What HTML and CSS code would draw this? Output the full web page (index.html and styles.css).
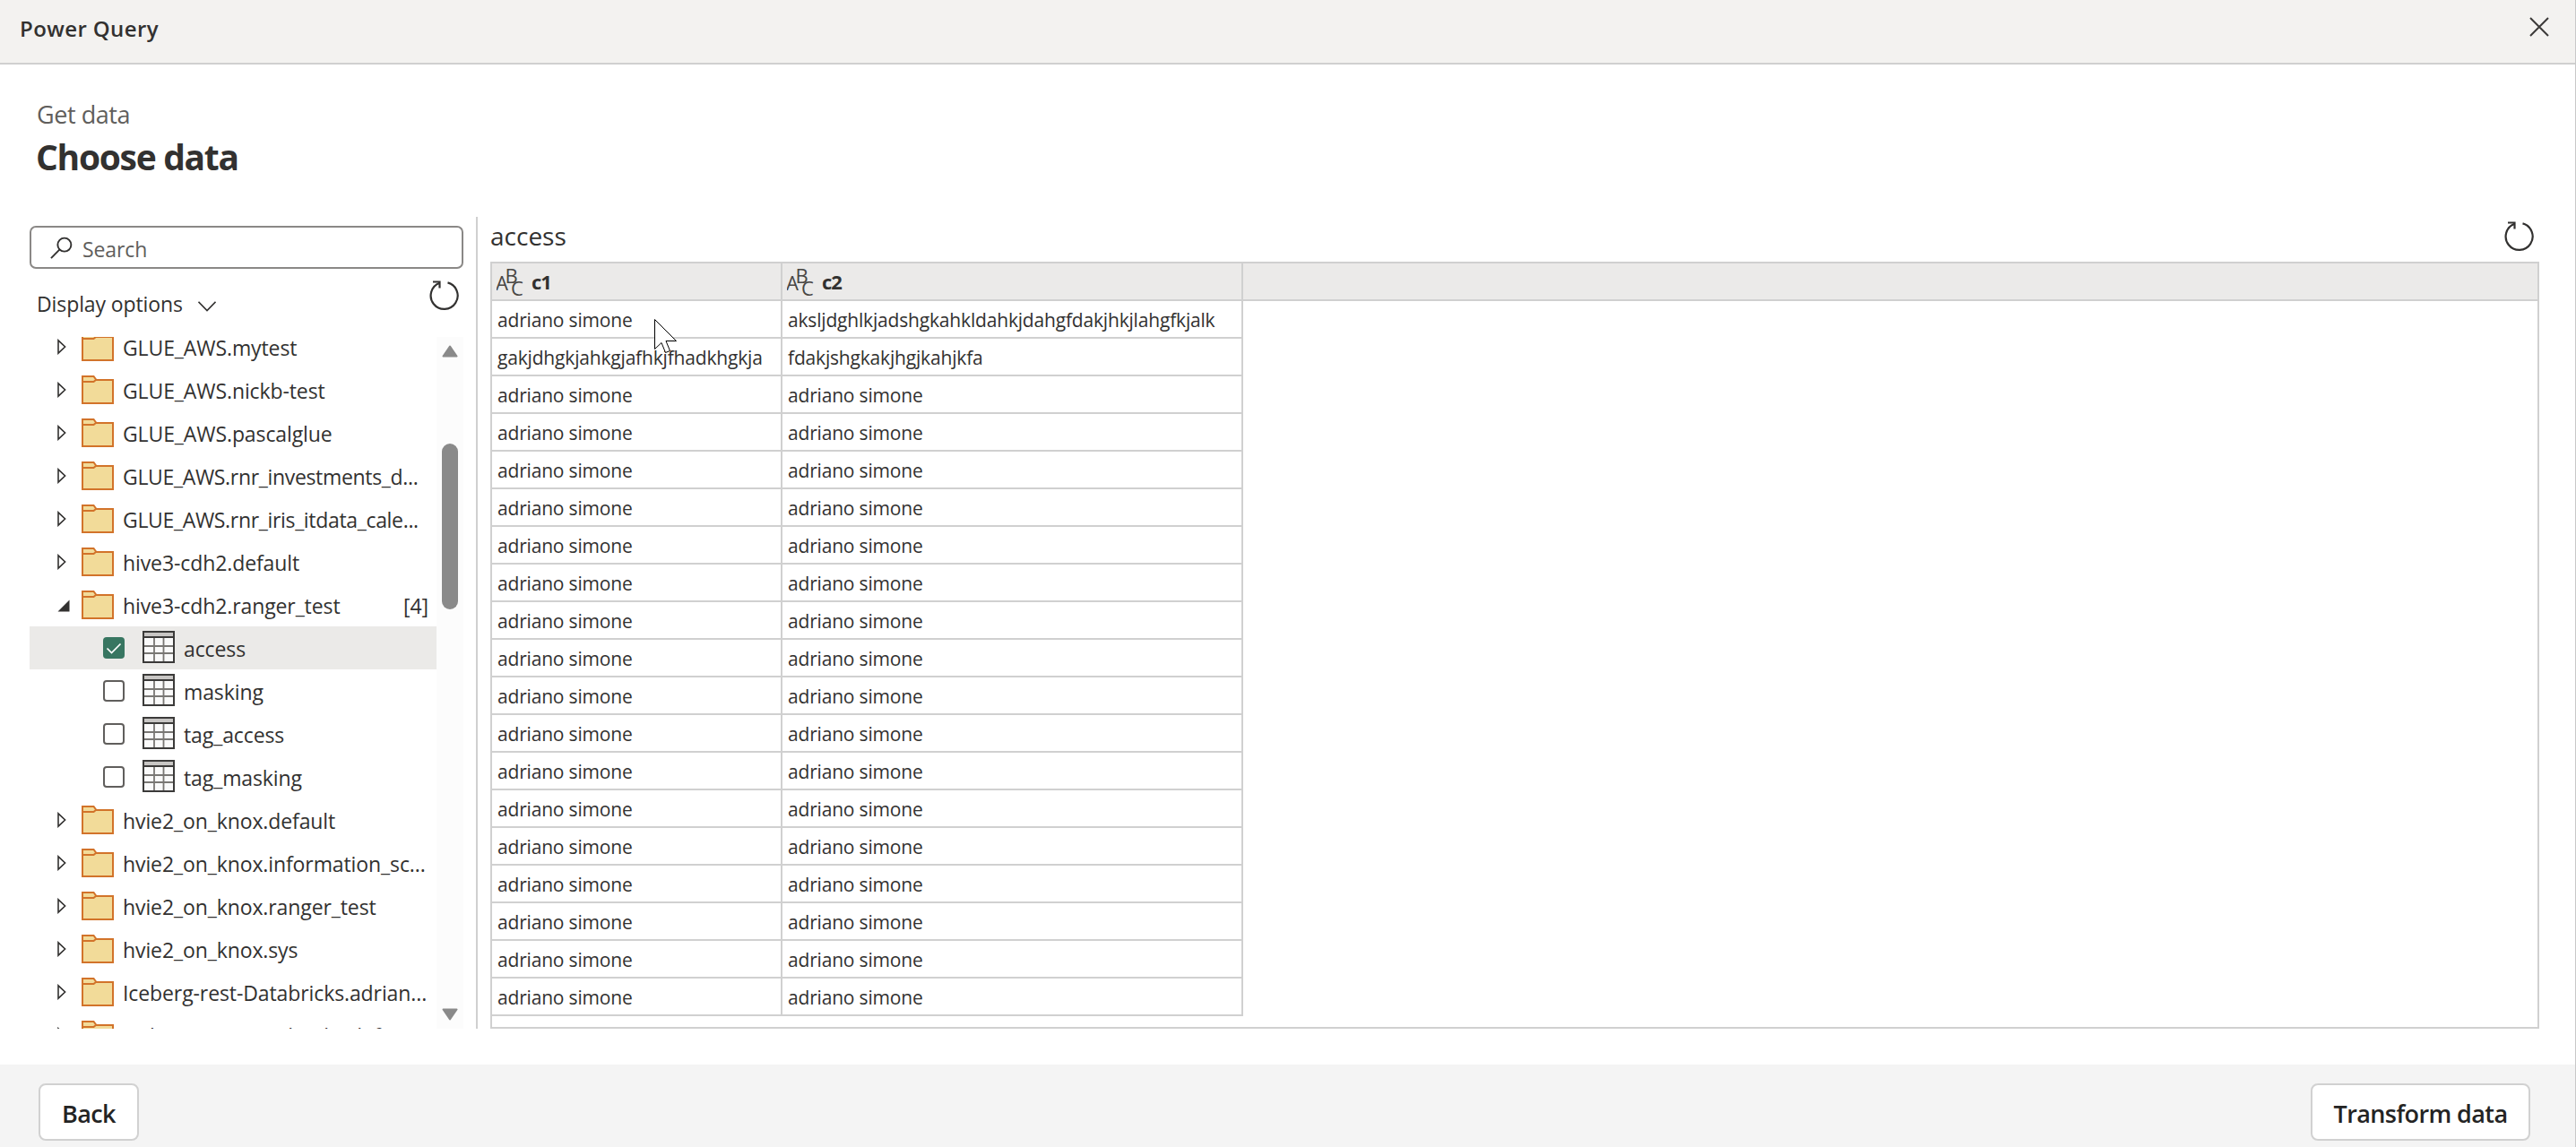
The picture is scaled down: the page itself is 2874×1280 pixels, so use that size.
FILE: index.html
```
<!DOCTYPE html>
<html lang="en">
<head>
  <meta charset="UTF-8">
  <title>Power Query</title>
  <meta name="viewport" content="width=device-width, initial-scale=1.0">
  <link rel="stylesheet" href="styles.css">
</head>
<body>

  <!-- ICONS -->
  <svg class="sprite" aria-hidden="true">
    <symbol id="i-folder" viewBox="0 0 36 32">
      <path d="M1 1H13.5L16.5 5H35V31H1Z" fill="#f2db99" stroke="#d2732a" stroke-width="2"/>
      <path d="M1 7H13.5L16.5 4.5" fill="none" stroke="#d2732a" stroke-width="2"/>
    </symbol>
    <symbol id="i-table" viewBox="0 0 36 36">
      <rect x="1" y="1" width="34" height="34" fill="#fafafa"/>
      <rect x="2" y="2" width="32" height="5" fill="#c8c6c4"/>
      <path d="M13 7V34M23.5 7V34M2 17H34M2 25H34" stroke="#797774" stroke-width="1.8"/>
      <path d="M1 7H35" stroke="#3b3a39" stroke-width="2"/>
      <rect x="1" y="1" width="34" height="34" fill="none" stroke="#3b3a39" stroke-width="2"/>
    </symbol>
    <symbol id="i-closed" viewBox="0 0 10 18">
      <path d="M1 1.8V16.2L8.6 9Z" fill="none" stroke="#323130" stroke-width="1.6"/>
    </symbol>
    <symbol id="i-open" viewBox="0 0 14 14">
      <path d="M13.5 0.5V13.5H0.5Z" fill="#323130"/>
    </symbol>
    <symbol id="i-refresh" viewBox="0 0 34 34">
      <path d="M20.5 2.4A15 15 0 1 1 11.5 2.8" fill="none" stroke="#323130" stroke-width="2.2"/>
      <path d="M4 1.5H11.5V8.5" fill="none" stroke="#323130" stroke-width="2.2"/>
    </symbol>
    <symbol id="i-abc" viewBox="0 0 32 34">
      <text x="-1" y="26" font-size="22">A</text>
      <text x="9.5" y="17.5" font-size="22">B</text>
      <text x="16" y="32" font-size="22">C</text>
    </symbol>
  </svg>

  <div class="dialog">
    <!-- HEADER -->
    <header class="titlebar">
      <span>Power Query</span>
      <svg class="close" viewBox="0 0 22 22"><path d="M1 1L21 21M21 1L1 21"/></svg>
    </header>

    <!-- CONTENT -->
    <main class="content">
      <div class="crumb">Get data</div>
      <h1>Choose data</h1>

      <div class="columns">
        <section class="navigator">
          <div class="search">
            <svg viewBox="0 0 26 26"><circle cx="16.5" cy="9" r="7.8"/><path d="M11 14.5L1 24.5"/></svg>
            <span>Search</span>
          </div>
          <div class="options">
            <span>Display options</span>
            <svg class="chevron" viewBox="0 0 20 12"><path d="M0.5 0.8L10 10.5L19.5 0.8"/></svg>
            <svg class="refresh"><use href="#i-refresh"/></svg>
          </div>

          <div class="tree">
            <div class="tree-list">
              <div class="node"><svg class="arrow"><use href="#i-closed"/></svg><svg class="folder"><use href="#i-folder"/></svg><span>GLUE_AWS.mytest</span></div>
              <div class="node"><svg class="arrow"><use href="#i-closed"/></svg><svg class="folder"><use href="#i-folder"/></svg><span>GLUE_AWS.nickb-test</span></div>
              <div class="node"><svg class="arrow"><use href="#i-closed"/></svg><svg class="folder"><use href="#i-folder"/></svg><span>GLUE_AWS.pascalglue</span></div>
              <div class="node long"><svg class="arrow"><use href="#i-closed"/></svg><svg class="folder"><use href="#i-folder"/></svg><span>GLUE_AWS.rnr_investments_d...</span></div>
              <div class="node long"><svg class="arrow"><use href="#i-closed"/></svg><svg class="folder"><use href="#i-folder"/></svg><span>GLUE_AWS.rnr_iris_itdata_cale...</span></div>
              <div class="node"><svg class="arrow"><use href="#i-closed"/></svg><svg class="folder"><use href="#i-folder"/></svg><span>hive3-cdh2.default</span></div>
              <div class="node"><svg class="arrow open"><use href="#i-open"/></svg><svg class="folder"><use href="#i-folder"/></svg><span>hive3-cdh2.ranger_test</span><span class="count">[4]</span></div>
              <div class="leaf selected"><i class="box checked"><svg viewBox="0 0 24 24"><path d="M4.5 12.5L9.5 17.5L19.5 7.5"/></svg></i><svg class="table-icon"><use href="#i-table"/></svg><span>access</span></div>
              <div class="leaf"><i class="box"></i><svg class="table-icon"><use href="#i-table"/></svg><span>masking</span></div>
              <div class="leaf"><i class="box"></i><svg class="table-icon"><use href="#i-table"/></svg><span>tag_access</span></div>
              <div class="leaf"><i class="box"></i><svg class="table-icon"><use href="#i-table"/></svg><span>tag_masking</span></div>
              <div class="node"><svg class="arrow"><use href="#i-closed"/></svg><svg class="folder"><use href="#i-folder"/></svg><span>hvie2_on_knox.default</span></div>
              <div class="node"><svg class="arrow"><use href="#i-closed"/></svg><svg class="folder"><use href="#i-folder"/></svg><span>hvie2_on_knox.information_sc...</span></div>
              <div class="node"><svg class="arrow"><use href="#i-closed"/></svg><svg class="folder"><use href="#i-folder"/></svg><span>hvie2_on_knox.ranger_test</span></div>
              <div class="node"><svg class="arrow"><use href="#i-closed"/></svg><svg class="folder"><use href="#i-folder"/></svg><span>hvie2_on_knox.sys</span></div>
              <div class="node"><svg class="arrow"><use href="#i-closed"/></svg><svg class="folder"><use href="#i-folder"/></svg><span>Iceberg-rest-Databricks.adrian...</span></div>
              <div class="node"><svg class="arrow"><use href="#i-closed"/></svg><svg class="folder"><use href="#i-folder"/></svg><span>Iceberg-rest-Databricks.def...</span></div>
            </div>
            <div class="scrollbar">
              <svg viewBox="0 0 18 14"><path d="M9 1.5L16.5 12.5H1.5Z"/></svg>
              <div class="thumb"></div>
              <svg viewBox="0 0 18 14"><path d="M9 12.5L16.5 1.5H1.5Z"/></svg>
            </div>
          </div>
        </section>

        <section class="preview">
          <div class="preview-head">
            <h2>access</h2>
            <svg class="refresh"><use href="#i-refresh"/></svg>
          </div>
          <div class="grid">
            <div class="row head">
              <div class="c1"><svg><use href="#i-abc"/></svg>c1</div>
              <div class="c2"><svg><use href="#i-abc"/></svg>c2</div>
            </div>
            <div class="row"><div class="c1">adriano simone</div><div class="c2">aksljdghlkjadshgkahkldahkjdahgfdakjhkjlahgfkjalk</div></div>
            <div class="row"><div class="c1">gakjdhgkjahkgjafhkjfhadkhgkja</div><div class="c2">fdakjshgkakjhgjkahjkfa</div></div>
            <div class="row"><div class="c1">adriano simone</div><div class="c2">adriano simone</div></div>
            <div class="row"><div class="c1">adriano simone</div><div class="c2">adriano simone</div></div>
            <div class="row"><div class="c1">adriano simone</div><div class="c2">adriano simone</div></div>
            <div class="row"><div class="c1">adriano simone</div><div class="c2">adriano simone</div></div>
            <div class="row"><div class="c1">adriano simone</div><div class="c2">adriano simone</div></div>
            <div class="row"><div class="c1">adriano simone</div><div class="c2">adriano simone</div></div>
            <div class="row"><div class="c1">adriano simone</div><div class="c2">adriano simone</div></div>
            <div class="row"><div class="c1">adriano simone</div><div class="c2">adriano simone</div></div>
            <div class="row"><div class="c1">adriano simone</div><div class="c2">adriano simone</div></div>
            <div class="row"><div class="c1">adriano simone</div><div class="c2">adriano simone</div></div>
            <div class="row"><div class="c1">adriano simone</div><div class="c2">adriano simone</div></div>
            <div class="row"><div class="c1">adriano simone</div><div class="c2">adriano simone</div></div>
            <div class="row"><div class="c1">adriano simone</div><div class="c2">adriano simone</div></div>
            <div class="row"><div class="c1">adriano simone</div><div class="c2">adriano simone</div></div>
            <div class="row"><div class="c1">adriano simone</div><div class="c2">adriano simone</div></div>
            <div class="row"><div class="c1">adriano simone</div><div class="c2">adriano simone</div></div>
            <div class="row"><div class="c1">adriano simone</div><div class="c2">adriano simone</div></div>
          </div>
        </section>
      </div>
    </main>

    <!-- FOOTER -->
    <footer class="footer">
      <button class="back">Back</button>
      <button class="transform">Transform data</button>
    </footer>
  </div>

  <svg class="cursor" viewBox="0 0 26 40"><path d="M0.5 0.5V33.5L8 26.5L12.5 37.5L17.5 35.5L13 24.5H24.5Z"/></svg>

</body>
</html>
```
FILE: styles.css
```
* {
  box-sizing: border-box;
}

body {
  margin: 0;
  font-family: "Open Sans", "Segoe UI", sans-serif;
  font-size: 23px;
  letter-spacing: -0.1px;
  color: #323130;
  background: #fff;
}

svg {
  flex: none;
  display: block;
}

.sprite {
  display: none;
}

.dialog {
  display: flex;
  flex-direction: column;
  height: 1280px;
  border-right: 1px solid #c8c8c8;
}

/* --- HEADER --- */
.titlebar {
  display: flex;
  justify-content: space-between;
  height: 72px;
  padding: 0 29px 0 22px;
  background: #f3f2f0;
  border-bottom: 2px solid #d0d0d0;
  font-size: 24px;
  font-weight: 600;
  line-height: 64px;
  letter-spacing: 0.4px;
}

.close {
  width: 22px;
  height: 22px;
  margin-top: 19px;
  fill: none;
  stroke: #3b3a39;
  stroke-width: 2;
}

/* --- CONTENT --- */
.content {
  height: 1116px;
  padding: 37px 40px 40px 33px;
}

.crumb {
  padding-left: 8px;
  font-size: 27px;
  line-height: 37px;
  letter-spacing: -0.45px;
  color: #605e5c;
}

h1 {
  margin: 3px 0 41px;
  padding-left: 7px;
  font-size: 39px;
  font-weight: 700;
  line-height: 52px;
  letter-spacing: -1.3px;
}

.columns {
  display: flex;
  height: 906px;
}

.navigator {
  width: 500px;
  padding: 10px 14px 0 0;
  border-right: 2px solid #d0d0d0;
}

.search {
  display: flex;
  height: 48px;
  padding: 10px 0 0 21px;
  border: 2px solid #8a8886;
  border-radius: 7px;
  color: #605e5c;
}

.search svg {
  width: 25px;
  height: 26px;
  fill: none;
  stroke: #323130;
  stroke-width: 2;
}

.search span {
  margin-left: 11px;
  line-height: 28px;
}

.options {
  display: flex;
  height: 76px;
  padding: 0 4px 0 8px;
  line-height: 79px;
}

.chevron {
  width: 20px;
  height: 12px;
  margin: 36px 0 0 17px;
  fill: none;
  stroke: #323130;
  stroke-width: 1.6;
}

.refresh {
  width: 34px;
  height: 34px;
  margin-left: auto;
}

.options .refresh {
  margin-top: 13px;
}

/* --- TREE --- */
.tree {
  display: flex;
  height: 772px;
  overflow: hidden;
}

.tree-list {
  width: 454px;
  margin-top: -13px;
}

.node,
.leaf {
  display: flex;
  height: 48px;
  line-height: 50px;
  white-space: nowrap;
}

.node {
  padding: 0 9px 0 31px;
}

.long {
  letter-spacing: -0.33px;
}

.arrow {
  width: 10px;
  height: 18px;
  margin: 15px 17px 0 0;
}

.arrow.open {
  width: 14px;
  height: 14px;
  margin: 18px 13px 0 0;
}

.folder {
  width: 36px;
  height: 32px;
  margin: 8px 10px 0 0;
}

.count {
  margin-left: auto;
}

.leaf {
  padding-left: 82px;
  line-height: 51px;
}

.selected {
  background: #ebeae8;
}

.box {
  width: 24px;
  height: 24px;
  margin: 12px 20px 0 0;
  border: 2px solid #605e5c;
  border-radius: 4px;
  background: #fff;
}

.box.checked {
  border: none;
  background: #387661;
}

.box svg {
  width: 24px;
  height: 24px;
  fill: none;
  stroke: #fff;
  stroke-width: 1.7;
}

.table-icon {
  width: 36px;
  height: 36px;
  margin: 5px 10px 0 0;
}

.scrollbar {
  width: 30px;
  padding: 9px 6px;
  background: #fcfcfc;
}

.scrollbar svg {
  width: 18px;
  height: 14px;
  fill: #8a8a8a;
  stroke: #8a8a8a;
  stroke-width: 2;
  stroke-linejoin: round;
}

.thumb {
  height: 185px;
  margin: 96px 0 445px;
  border-radius: 9px;
  background: #8a8a8a;
}

/* --- PREVIEW --- */
.preview {
  flex: 1;
  padding-left: 14px;
}

.preview-head {
  display: flex;
  height: 50px;
  padding-right: 5px;
}

h2 {
  margin: 0;
  font-size: 28px;
  font-weight: 400;
  line-height: 42px;
  letter-spacing: 0;
}

.preview-head .refresh {
  margin-top: 5px;
}

.grid {
  height: 856px;
  border: 2px solid #d0d0d0;
}

.row {
  display: flex;
  height: 42px;
  font-size: 21px;
  line-height: 42px;
  letter-spacing: -0.18px;
}

.c1,
.c2 {
  padding-left: 6px;
  border-right: 2px solid #d0d0d0;
  border-bottom: 2px solid #d0d0d0;
}

.c1 {
  width: 324px;
}

.c2 {
  width: 514px;
}

.head {
  background: #ebeae9;
  border-bottom: 2px solid #d0d0d0;
  font-size: 22px;
  font-weight: 700;
  letter-spacing: -1px;
}

.head .c1,
.head .c2 {
  display: flex;
  padding-left: 5px;
  border-bottom: none;
  line-height: 40px;
}

.head svg {
  width: 32px;
  height: 34px;
  margin: 4px 7px 0 0;
  font-weight: 400;
  letter-spacing: 0;
  fill: #484644;
}

/* --- FOOTER --- */
.footer {
  display: flex;
  justify-content: space-between;
  height: 92px;
  padding: 21px 50px 0 43px;
  background: #f4f4f4;
}

.footer button {
  height: 64px;
  padding: 2px 0 0;
  border: 2px solid #d1d1d1;
  border-radius: 8px;
  background: #fff;
  color: #242424;
  font-family: inherit;
  font-size: 27px;
  font-weight: 600;
  letter-spacing: -0.6px;
}

.back {
  width: 112px;
}

.transform {
  width: 245px;
}

/* mouse pointer over the grid */
.cursor {
  position: absolute;
  left: 730px;
  top: 356px;
  width: 26px;
  height: 40px;
  fill: #fff;
  stroke: #000;
  stroke-width: 1;
}
```
